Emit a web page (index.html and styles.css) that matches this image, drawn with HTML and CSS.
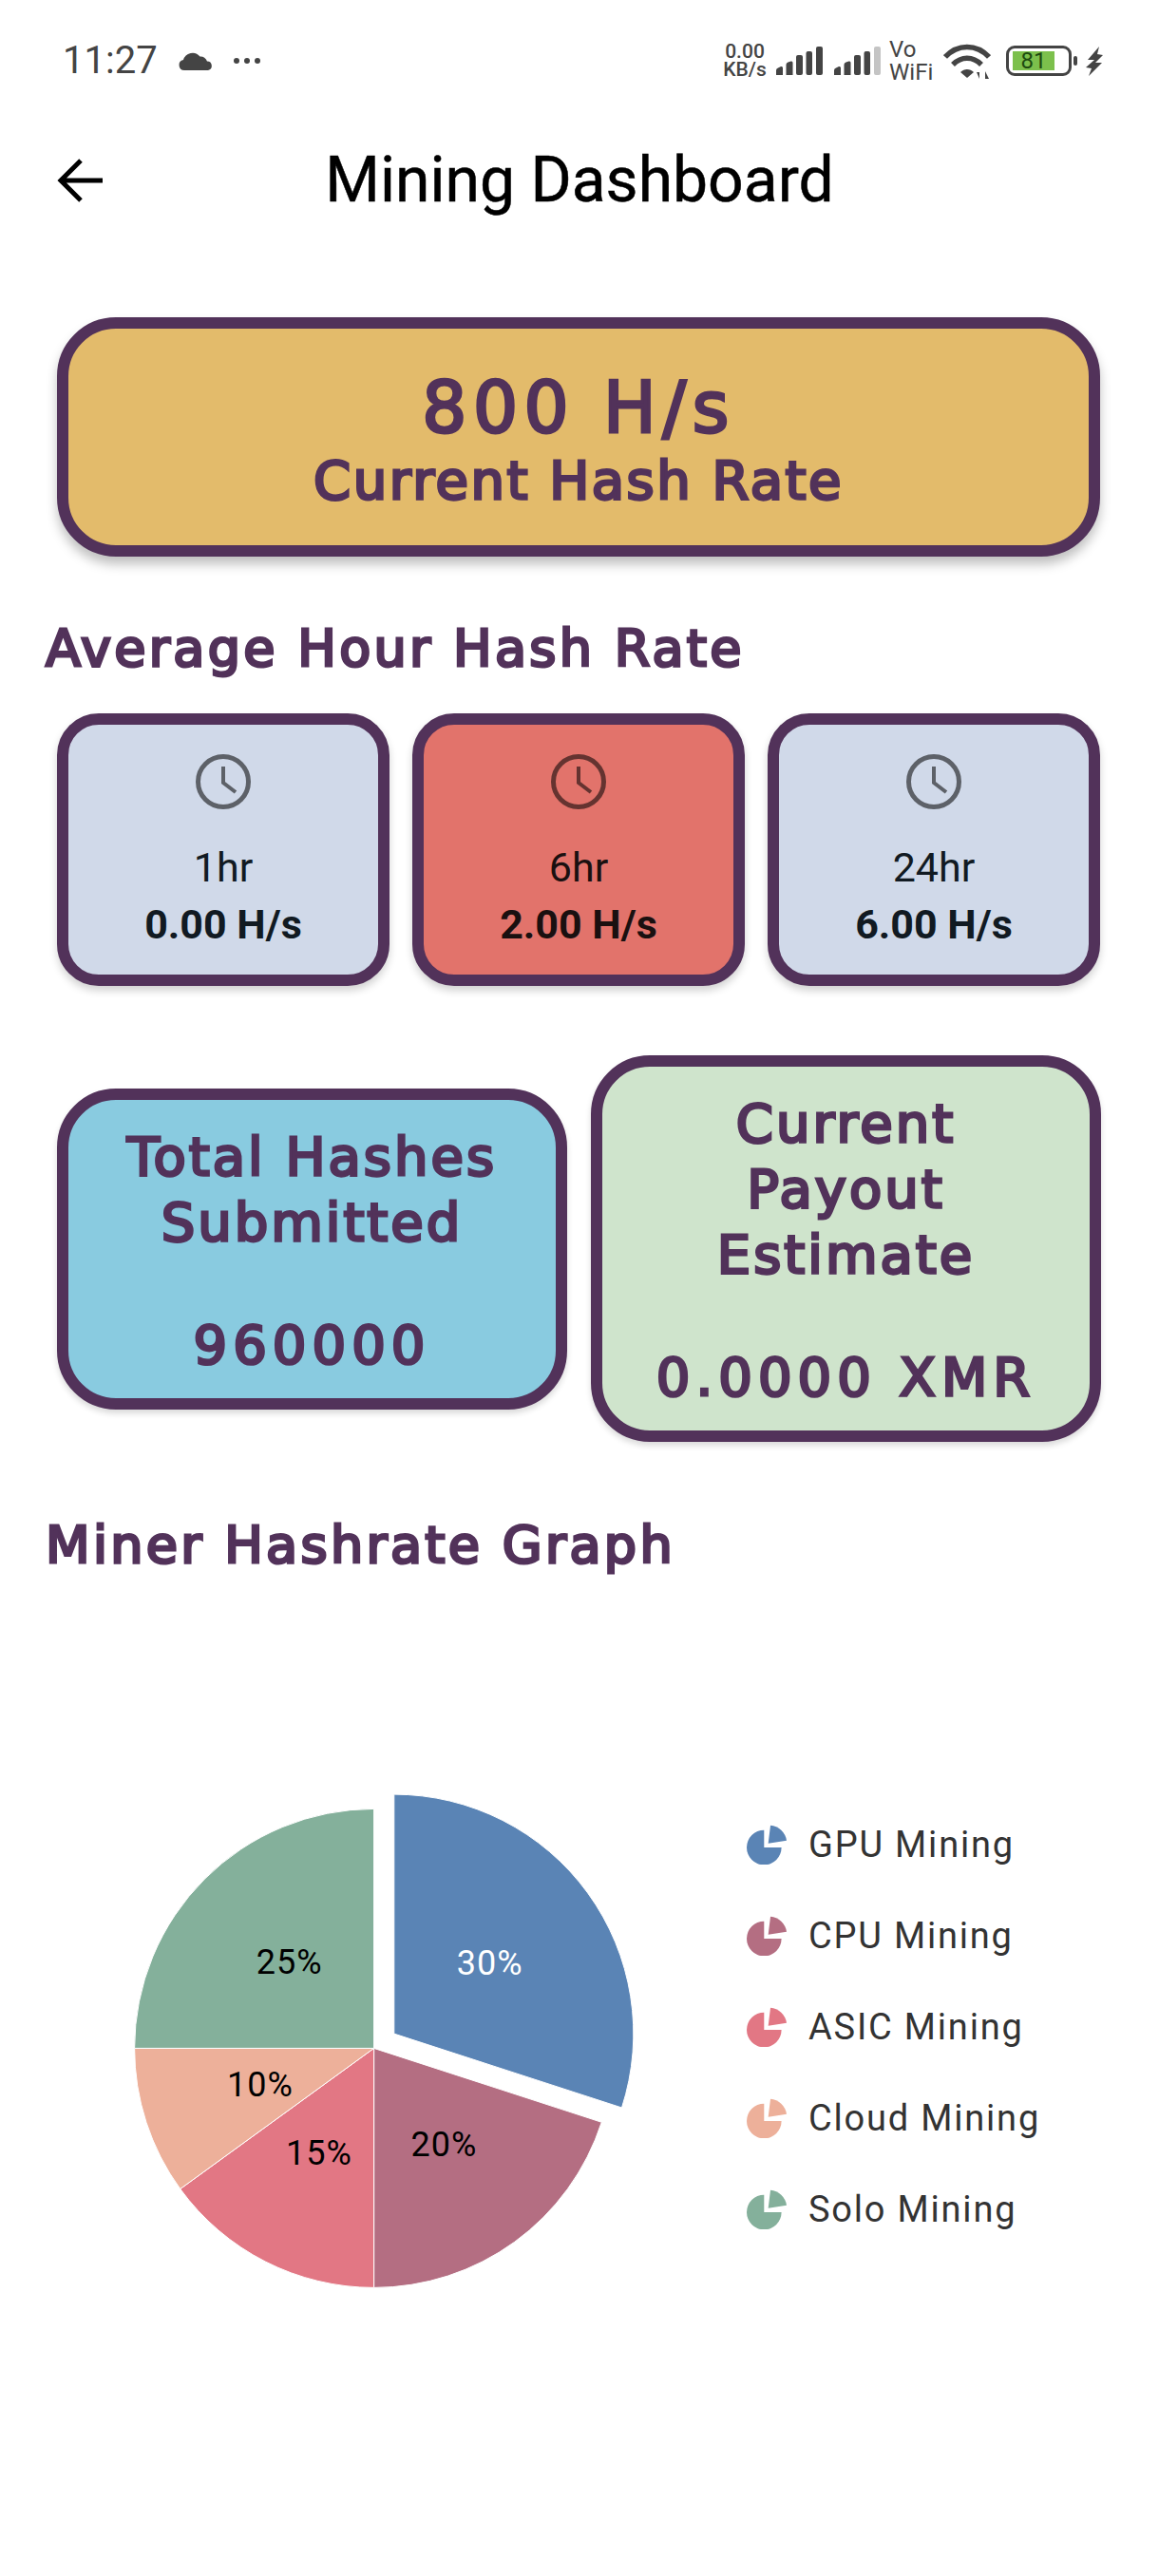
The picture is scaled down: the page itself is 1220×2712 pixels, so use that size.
FILE: index.html
```html
<!DOCTYPE html>
<html lang="en">
<head>
    <meta charset="UTF-8">
    <meta name="viewport" content="width=device-width, initial-scale=1.0">
    <title>Mining Dashboard</title>
    <link rel="stylesheet" href="styles.css">
</head>
<body>
    <div class="status-bar">
        <div class="status-left">
            <span class="time">11:27</span>
            <svg class="cloud" width="36" height="20" viewBox="0 0 36 20"><path d="M6 20a5.500 5.500 0 0 1-1-10.900A10 10 0 0 1 22.500 5.500 7 7 0 0 1 30 10.500 4.800 4.800 0 0 1 31 20z" fill="#444"/></svg>
            <svg class="dots" width="30" height="8" viewBox="0 0 30 8"><circle cx="4" cy="4" r="3" fill="#444"/><circle cx="15" cy="4" r="3" fill="#444"/><circle cx="26" cy="4" r="3" fill="#444"/></svg>
        </div>
        <div class="status-right">
            <div class="speed"><span>0.00</span><span>KB/s</span></div>
            <svg class="signal" width="49" height="30" viewBox="0 0 49 30">
                <path d="M0 25q0-2 2-2.500l3-1.500q2-.5 2 1.500V30H0z" fill="#444"/>
                <path d="M10.500 19q0-2 2-2.500l3-1q2-.5 2 1.500v13h-7z" fill="#444"/>
                <rect x="21" y="9" width="7" height="21" rx="2" fill="#444"/>
                <rect x="31.500" y="5" width="6.500" height="25" rx="2" fill="#444"/>
                <rect x="42" y="0" width="7" height="30" rx="2" fill="#444"/>
            </svg>
            <svg class="signal" width="49" height="30" viewBox="0 0 49 30">
                <path d="M0 25q0-2 2-2.500l3-1.500q2-.5 2 1.500V30H0z" fill="#444"/>
                <path d="M10.500 19q0-2 2-2.500l3-1q2-.5 2 1.500v13h-7z" fill="#444"/>
                <rect x="21" y="9" width="7" height="21" rx="2" fill="#444"/>
                <rect x="31.500" y="5" width="6.500" height="25" rx="2" fill="#444"/>
                <rect x="42" y="0" width="7" height="30" rx="2" fill="#c4c4c4"/>
            </svg>
            <div class="vowifi"><span>Vo</span><span>WiFi</span></div>
            <svg class="wifi" width="50" height="37" viewBox="0 0 50 37">
                <path d="M2 14C15 0 35 0 48 14" fill="none" stroke="#444" stroke-width="5.500"/>
                <path d="M10 22C19 13 31 13 40 22" fill="none" stroke="#444" stroke-width="5.500"/>
                <path d="M18 30C22 26 28 26 32 30L25 36z" fill="#444"/>
                <path d="M35 30h3v7zM41 37h3v-8l4 8z" fill="#444"/>
            </svg>
            <div class="battery">
                <div class="battery-body"><div class="battery-level"></div><span class="battery-num">81</span></div>
                <div class="battery-cap"></div>
            </div>
            <svg class="bolt" width="19" height="31" viewBox="0 0 19 31"><path d="M14 0 2 14h7L0 22l6 1-3 8 14-14h-7l8-8-6-1z" fill="#444"/></svg>
        </div>
    </div>

    <div class="app-bar">
        <svg class="back" width="48" height="46" viewBox="0 0 48 46"><path d="M48 23H4M25 2 4 23l21 21" fill="none" stroke="#000" stroke-width="5"/></svg>
        <h1>Mining Dashboard</h1>
    </div>

    <main class="page">
        <div class="card hero">
            <div class="hero-value">800 H/s</div>
            <div class="hero-label">Current Hash Rate</div>
        </div>

        <h2 class="section-title avg-title">Average Hour Hash Rate</h2>
        <div class="hour-row">
            <div class="hour-card">
                <svg class="clock" width="70" height="70" viewBox="0 0 70 70"><circle cx="35" cy="35" r="26.500" fill="none" stroke="#000" stroke-width="5"/><path d="M35 19v17l13 10" fill="none" stroke="#000" stroke-width="4"/></svg>
                <div class="hour-label">1hr</div>
                <div class="hour-value">0.00 H/s</div>
            </div>
            <div class="hour-card active">
                <svg class="clock" width="70" height="70" viewBox="0 0 70 70"><circle cx="35" cy="35" r="26.500" fill="none" stroke="#000" stroke-width="5"/><path d="M35 19v17l13 10" fill="none" stroke="#000" stroke-width="4"/></svg>
                <div class="hour-label">6hr</div>
                <div class="hour-value">2.00 H/s</div>
            </div>
            <div class="hour-card">
                <svg class="clock" width="70" height="70" viewBox="0 0 70 70"><circle cx="35" cy="35" r="26.500" fill="none" stroke="#000" stroke-width="5"/><path d="M35 19v17l13 10" fill="none" stroke="#000" stroke-width="4"/></svg>
                <div class="hour-label">24hr</div>
                <div class="hour-value">6.00 H/s</div>
            </div>
        </div>

        <div class="stat-row">
            <div class="card stat blue">
                <div class="stat-title">Total Hashes<br>Submitted</div>
                <div class="stat-value">960000</div>
            </div>
            <div class="card stat green">
                <div class="stat-title">Current<br>Payout<br>Estimate</div>
                <div class="stat-value">0.0000 XMR</div>
            </div>
        </div>

        <h2 class="section-title graph-title">Miner Hashrate Graph</h2>
    </main>

    <div class="chart">
        <svg class="pie" width="560" height="560" viewBox="120 1860 560 560">
            <g stroke="#fff" stroke-width="1">
                <path d="M414.800 2141.100V1889.100A252 252 0 0 1 654.500 2218.970Z" fill="#5a84b5"/>
                <path d="M393.600 2156.400L633.260 2234.270A252 252 0 0 1 393.600 2408.400Z" fill="#b46e82"/>
                <path d="M393.600 2156.400V2408.400A252 252 0 0 1 189.730 2304.520Z" fill="#e27784"/>
                <path d="M393.600 2156.400L189.730 2304.520A252 252 0 0 1 141.600 2156.400Z" fill="#edb09a"/>
                <path d="M393.600 2156.400H141.600A252 252 0 0 1 393.600 1904.400Z" fill="#84b09b"/>
            </g>
            <text class="pie-label light" x="515.600" y="2079">30%</text>
            <text class="pie-label" x="467.500" y="2270">20%</text>
            <text class="pie-label" x="336" y="2279">15%</text>
            <text class="pie-label" x="274" y="2207">10%</text>
            <text class="pie-label" x="304.600" y="2078">25%</text>
        </svg>
        <ul class="legend">
            <li><svg width="42" height="42" viewBox="0 0 42 42"><path d="M18.300 5.700A18.300 18.300 0 1 0 36.600 24H18.300z" fill="#5a84b5"/><path d="M22.700 19.700 25 .700A19 19 0 0 1 42 16.700z" fill="#5a84b5"/></svg>GPU Mining</li>
            <li><svg width="42" height="42" viewBox="0 0 42 42"><path d="M18.300 5.700A18.300 18.300 0 1 0 36.600 24H18.300z" fill="#b46e82"/><path d="M22.700 19.700 25 .700A19 19 0 0 1 42 16.700z" fill="#b46e82"/></svg>CPU Mining</li>
            <li><svg width="42" height="42" viewBox="0 0 42 42"><path d="M18.300 5.700A18.300 18.300 0 1 0 36.600 24H18.300z" fill="#e27784"/><path d="M22.700 19.700 25 .700A19 19 0 0 1 42 16.700z" fill="#e27784"/></svg>ASIC Mining</li>
            <li><svg width="42" height="42" viewBox="0 0 42 42"><path d="M18.300 5.700A18.300 18.300 0 1 0 36.600 24H18.300z" fill="#edb09a"/><path d="M22.700 19.700 25 .700A19 19 0 0 1 42 16.700z" fill="#edb09a"/></svg>Cloud Mining</li>
            <li><svg width="42" height="42" viewBox="0 0 42 42"><path d="M18.300 5.700A18.300 18.300 0 1 0 36.600 24H18.300z" fill="#84b09b"/><path d="M22.700 19.700 25 .700A19 19 0 0 1 42 16.700z" fill="#84b09b"/></svg>Solo Mining</li>
        </ul>
    </div>
</body>
</html>
```

FILE: styles.css
```css
* {
    box-sizing: border-box;
}
body {
    margin: 0;
    background-color: #ffffff;
    font-family: Roboto, Arial, sans-serif;
    color: #000;
    overflow-x: hidden;
}
.status-bar {
    display: flex;
    justify-content: space-between;
    align-items: center;
    height: 128px;
    padding: 0 58px 0 66px;
    color: #444;
}
.status-left, .status-right {
    display: flex;
    align-items: center;
}
.time {
    font-size: 40px;
    line-height: 40px;
}
.cloud {
    margin-left: 22px;
}
.dots {
    margin-left: 21px;
}
.speed {
    display: flex;
    flex-direction: column;
    align-items: center;
    font-size: 21px;
    line-height: 19px;
    font-weight: 500;
    width: 46px;
}
.signal {
    margin-left: 10px;
}
.signal + .signal {
    margin-left: 12px;
}
.vowifi {
    display: flex;
    flex-direction: column;
    margin-left: 9px;
    font-size: 24px;
    line-height: 24px;
    width: 46px;
}
.wifi {
    margin-left: 11px;
}
.battery {
    display: flex;
    align-items: center;
    margin-left: 16px;
}
.battery-body {
    position: relative;
    width: 69px;
    height: 32px;
    border: 3px solid #444;
    border-radius: 9px;
}
.battery-level {
    width: 44px;
    height: 20px;
    margin: 3px 0 0 4px;
    background-color: #7cc04c;
}
.battery-num {
    position: absolute;
    top: 0;
    left: 4px;
    width: 44px;
    text-align: center;
    font-size: 24px;
    line-height: 26px;
    color: #1d4a10;
}
.battery-cap {
    width: 4px;
    height: 10px;
    margin-left: 2px;
    border-radius: 2px;
    background-color: #444;
}
.bolt {
    margin-left: 9px;
}
.app-bar {
    display: grid;
    grid-template-columns: 112px 1fr 112px;
    align-items: center;
    height: 124px;
}
.back {
    margin-left: 60px;
}
h1 {
    grid-column: 2;
    margin: 0;
    text-align: center;
    font-size: 66px;
    line-height: 76px;
    font-weight: 400;
    -webkit-text-stroke: 0.5px #000;
}
.page {
    padding: 0 50px 0 48px;
}
.card {
    border: 12px solid #52325a;
    color: #52325a;
    text-align: center;
    font-family: "DejaVu Sans", Lato, sans-serif;
    -webkit-text-stroke: 3px #52325a;
}
.hero {
    margin: 82px 12px 0;
    padding: 45px 0 37px;
    border-radius: 62px;
    background-color: #e3bb6b;
    box-shadow: 0 8px 12px rgba(0,0,0,0.25);
}
.hero-value {
    font-size: 74px;
    line-height: 76px;
    letter-spacing: 6.5px;
}
.hero-label {
    margin-top: 8px;
    font-size: 56px;
    line-height: 62px;
    letter-spacing: 2.5px;
}
.section-title {
    margin: 0;
    color: #52325a;
    font-family: "DejaVu Sans", Lato, sans-serif;
    font-size: 54px;
    line-height: 64px;
    font-weight: 400;
    letter-spacing: 3.3px;
    -webkit-text-stroke: 3px #52325a;
}
.avg-title {
    margin-top: 65px;
}
.hour-row {
    display: flex;
    gap: 24px;
    margin: 36px 12px 0;
}
.hour-card {
    flex: 1;
    display: flex;
    flex-direction: column;
    align-items: center;
    height: 287px;
    padding-top: 25px;
    border: 12px solid #52325a;
    border-radius: 44px;
    background-color: #d0d9e9;
    box-shadow: 0 5px 8px rgba(0,0,0,0.18);
    color: #111a22;
}
.hour-card.active {
    background-color: #e2736b;
    color: #1a1010;
}
.clock {
    opacity: 0.55;
}
.hour-label {
    margin-top: 26px;
    font-size: 43px;
    line-height: 59px;
}
.hour-value {
    margin-top: 1px;
    font-size: 43px;
    line-height: 59px;
    font-weight: 700;
}
.stat-row {
    display: flex;
    align-items: center;
    gap: 25px;
    margin: 73px 11px 0 12px;
}
.stat {
    flex: 1;
    padding: 25px 0 22px;
    border-radius: 62px;
    box-shadow: 0 4px 6px rgba(0,0,0,0.15);
}
.stat.blue {
    background-color: #89cbe0;
}
.stat.green {
    background-color: #cfe4cc;
}
.stat-title, .stat-value {
    font-size: 56px;
    line-height: 69px;
}
.stat-title {
    letter-spacing: 3px;
}
.stat-value {
    margin-top: 60px;
    letter-spacing: 6px;
}
.graph-title {
    margin-top: 77px;
}
.chart {
    display: flex;
    margin-top: 201px;
    padding-left: 120px;
}
.pie-label {
    font-size: 36px;
    letter-spacing: 1px;
    text-anchor: middle;
    fill: #000;
}
.pie-label.light {
    fill: #fff;
}
.legend {
    margin: 34px 0 0 106px;
    padding: 0;
    list-style: none;
}
.legend li {
    display: flex;
    align-items: center;
    gap: 23px;
    height: 96px;
    font-size: 38px;
    letter-spacing: 1.8px;
    color: #333;
}
```
